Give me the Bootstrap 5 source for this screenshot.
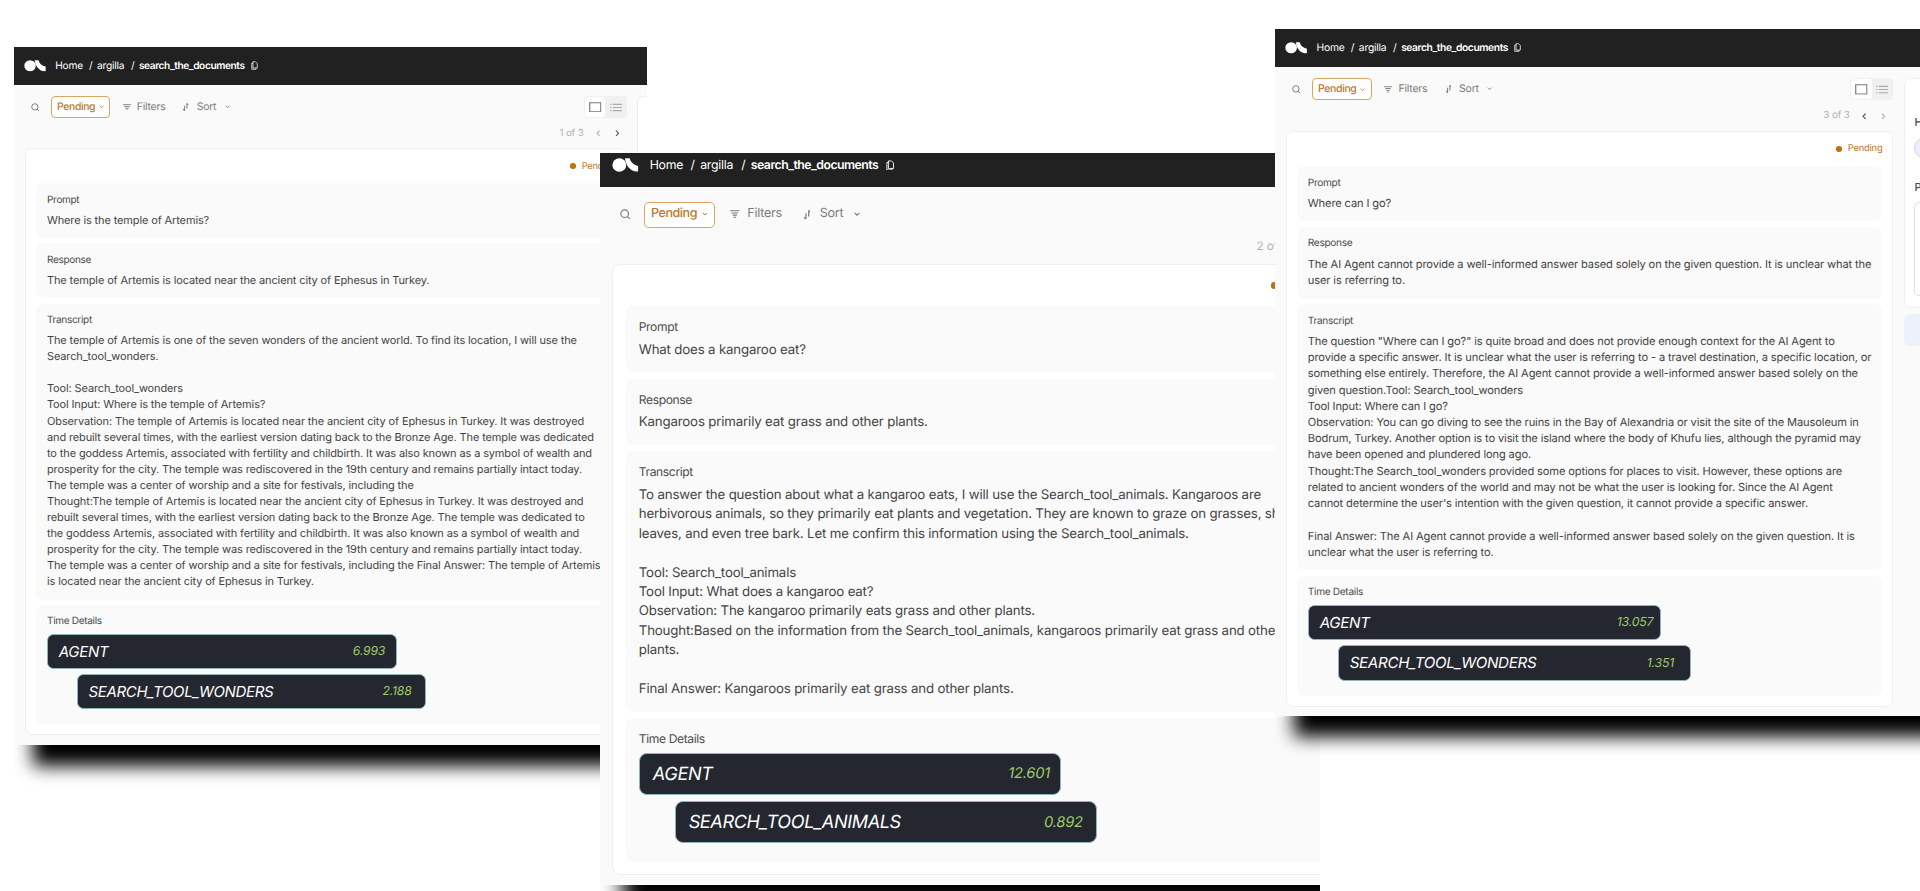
<!DOCTYPE html>
<html lang="en">
<head>
<meta charset="utf-8">
<meta name="viewport" content="width=device-width, initial-scale=1">
<title>search_the_documents</title>
<link rel="stylesheet" href="https://cdn.jsdelivr.net/npm/bootstrap@5.3.0/dist/css/bootstrap.min.css">
<style>
body{background:#fff;width:1920px;height:891px;overflow:hidden;position:relative;font-family:Inter,"Liberation Sans",sans-serif;text-rendering:geometricPrecision;color:#4b4b4b}
svg{display:block;flex:none}
/* overlapping windows, all measures inside are in em of the window */
.win{position:absolute;overflow:hidden;line-height:1}
.win-1{left:14px;top:47.4px;width:633px;height:760px;font-size:10px}
.win-2{left:600px;top:153.4px;width:720px;height:738px;font-size:12.07px}
.win-3{left:1275px;top:29px;width:645px;height:760px;font-size:10.1px}
.win-2 .sheet{margin-top:-10.9px}
.win-2 .desk{padding-left:1.03em;padding-bottom:.86em}
.win-3 .desk{padding-left:1.05em}
.sheet{width:80em;background:#fafafa;box-shadow:0 4em 1.7em -1.9em #000}
.topbar{height:3.72em;background:#212121;color:#fff;padding-left:1.02em}
.topbar span{font-size:1.02em;letter-spacing:-.02em;white-space:nowrap}
.topbar .c-logo{width:3.1em}
.topbar .c-home{width:3.32em}
.topbar .c-sl{width:.78em}
.topbar .c-org{width:3.33em}
.topbar .c-name{width:11em;font-weight:600;letter-spacing:-.042em}
.desk{padding:1.17em 0 .83em 1.1em}
.main-col{width:60.18em;flex:none}
.side-col{margin-left:1.06em;width:20em}
.tools{height:2.16em;padding-left:.62em;color:#7b7b7b}
.tools .t{font-size:1.04em;letter-spacing:-.02em;white-space:nowrap}
.tools .t-filters{width:4.48em;margin-left:.6em}
.tools .t-sort{width:2.7em;margin-left:.76em}
.pend{width:5.9em;height:2.16em;border:1px solid #d9a662;border-radius:.4em;background:#fff;color:#bd762a;margin:0 1.25em 0 1.12em;padding:0 .55em 0 .5em}
.pend .t{font-weight:500;letter-spacing:-.035em}
.toggle-box{background:#f0f0f0;border-radius:.4em;width:4.25em;height:2.14em;padding:.1em}
.toggle-box .on{background:#fff;border-radius:.3em;width:2em}
.pager{height:3.05em;color:#b0b0b0;padding:.08em .75em 0 0}
.pager .t{font-size:.97em;letter-spacing:-.01em;white-space:nowrap;margin-right:1.27em}
.pager svg:nth-child(2){margin-right:1.42em}
.pager .live{color:#555}
.win-2 .pager .t{margin-right:3.55em}
.record{background:#fff;border:1px solid #efefef;border-radius:.7em;padding:0 1.05em 1em 1em}
.status{height:3.37em;color:#bd762a}
.status .t{font-size:.93em;letter-spacing:-.025em;white-space:nowrap;width:3.62em}
.status i{width:.55em;height:.55em;border-radius:50%;background:#bf7010;margin-right:.6em}
.field{background:#fafafa;border-radius:.7em;padding:1.15em 0 1.02em 1.1em}
.field+.field{margin-top:.54em}
.field h2{font-size:1em;letter-spacing:-.03em;line-height:1.1em;margin:0 0 .61em;font-weight:400;color:#4b4b4b}
.field p{font-size:1.1em;letter-spacing:-.0118em;line-height:1.461em;margin:0;white-space:pre;color:#454545}
.win-2 .field p{letter-spacing:-.0125em}
.bar-t{width:34.98em;height:3.5em;background:#24272f;border:1px solid #8fb5bd;border-radius:.65em;color:#fff;font-style:italic;padding-left:1.08em}
.bar-t span{font-size:1.5em;letter-spacing:-.021em;white-space:nowrap}
.bar-t b{font-size:1.22em;letter-spacing:-.015em;font-weight:400;color:#9fcb6b;width:3.52em;white-space:nowrap}
.bar-t+.bar-t{margin:.52em 0 .5em 2.97em}
.panel-w{background:#fff;border:1px solid #efefef;border-radius:.7em;height:22.7em;padding:3.7em 0 0 .92em}
.panel-w.tall{height:64em}
.panel-w .t{font-size:1.1em;font-weight:500}
.pill{height:1.95em;width:8em;border:1px solid #cfcdf5;background:#eeeefd;border-radius:1em;margin:1em 0 2.4em}
.ta{height:9.4em;width:16em;border:1px solid #e0e0e0;border-radius:.5em;margin-top:.85em}
.save{background:#edf1fc;border-radius:.6em;height:3.2em;margin-top:.6em}
</style>
<script src="https://cdn.jsdelivr.net/npm/bootstrap@5.3.0/dist/js/bootstrap.bundle.min.js"></script>
</head>
<body>
<svg width="0" height="0" class="position-absolute">
  <symbol id="logo" viewBox="0 0 78 42"><ellipse cx="21" cy="21" rx="21" ry="20.500"/><path d="M38 1h14q5 19 26 23v17q-11 1-19-4Q41 27 38 1z"/></symbol>
  <symbol id="copy" viewBox="0 0 14 18"><path d="M4 1.500h5l3.500 3.500v9H4z M10 14v2.500H1.500V4H4" fill="none" stroke="#fff" stroke-width="1.500"/></symbol>
  <symbol id="search" viewBox="0 0 18 18"><path d="M8 1.500a6.500 6.500 0 1 1 0 13 6.500 6.500 0 0 1 0-13z M12.500 12.500l4.500 4.500" fill="none" stroke="currentColor" stroke-width="2"/></symbol>
  <symbol id="down" viewBox="0 0 10 7"><path d="M1 1.200l4 4 4-4" fill="none" stroke="currentColor" stroke-width="1.700"/></symbol>
  <symbol id="filter" viewBox="0 0 18 15"><path d="M0 1.500h18M3 5.500h12M5 9.500h8M6.500 13.500h5" fill="none" stroke="currentColor" stroke-width="2"/></symbol>
  <symbol id="sort" viewBox="0 0 12 16"><path d="M3.500 5v11M8.500 0v11M0 12.500l3.500 3.500M12 3.500L8.500 0" fill="none" stroke="currentColor" stroke-width="2.200"/></symbol>
  <symbol id="square" viewBox="0 0 26 22"><path d="M1.500 1.500h23v19h-23z" fill="none" stroke="#777" stroke-width="2.400"/></symbol>
  <symbol id="list" viewBox="0 0 26 20"><path d="M6 3h20M6 10h20M6 17h20M0 3h3M0 10h3M0 17h3" fill="none" stroke="currentColor" stroke-width="2.400"/></symbol>
  <symbol id="prev" viewBox="0 0 7 10"><path d="M5.500 1l-4 4 4 4" fill="none" stroke="currentColor" stroke-width="1.700"/></symbol>
  <symbol id="next" viewBox="0 0 7 10"><path d="M1.500 1l4 4-4 4" fill="none" stroke="currentColor" stroke-width="1.700"/></symbol>
</svg>

<section class="win win-1"><div class="sheet">
  <header class="topbar d-flex align-items-center">
    <div class="c-logo"><svg width="2.200em" height="1.150em" fill="#fff"><use href="#logo"/></svg></div>
    <span class="c-home">Home</span><span class="c-sl">/</span><span class="c-org">argilla</span><span class="c-sl">/</span><span class="c-name">search_the_documents</span>
    <svg width=".7em" height=".9em"><use href="#copy"/></svg>
  </header>
  <div class="desk d-flex">
    <main class="main-col">
      <div class="tools d-flex align-items-center">
        <svg width=".87em" height=".87em"><use href="#search"/></svg>
        <div class="pend d-flex align-items-center justify-content-between"><span class="t">Pending</span><svg width=".48em" height=".35em"><use href="#down"/></svg></div>
        <svg width=".8em" height=".67em"><use href="#filter"/></svg><span class="t t-filters">Filters</span>
        <svg width=".55em" height=".8em"><use href="#sort"/></svg><span class="t t-sort">Sort</span>
        <svg width=".5em" height=".36em"><use href="#down"/></svg>
        <div class="toggle-box d-flex ms-auto"><div class="on d-flex align-items-center justify-content-center"><svg width="1.250em" height="1.060em"><use href="#square"/></svg></div><div class="flex-fill d-flex align-items-center justify-content-center" style="color:#aaa"><svg width="1.200em" height=".9em"><use href="#list"/></svg></div></div>
      </div>
      <div class="pager d-flex align-items-center justify-content-end"><span class="t">1 of 3</span><svg width=".46em" height=".66em"><use href="#prev"/></svg><svg class="live" width=".46em" height=".66em"><use href="#next"/></svg></div>
      <article class="record">
        <div class="status d-flex align-items-center justify-content-end"><i></i><span class="t">Pending</span></div>
        <div class="field"><h2>Prompt</h2><p>Where is the temple of Artemis?</p></div>
        <div class="field"><h2>Response</h2><p>The temple of Artemis is located near the ancient city of Ephesus in Turkey.</p></div>
        <div class="field"><h2>Transcript</h2><p>The temple of Artemis is one of the seven wonders of the ancient world. To find its location, I will use the
Search_tool_wonders.

Tool: Search_tool_wonders
Tool Input: Where is the temple of Artemis?
Observation: The temple of Artemis is located near the ancient city of Ephesus in Turkey. It was destroyed
and rebuilt several times, with the earliest version dating back to the Bronze Age. The temple was dedicated
to the goddess Artemis, associated with fertility and childbirth. It was also known as a symbol of wealth and
prosperity for the city. The temple was rediscovered in the 19th century and remains partially intact today.
The temple was a center of worship and a site for festivals, including the
Thought:The temple of Artemis is located near the ancient city of Ephesus in Turkey. It was destroyed and
rebuilt several times, with the earliest version dating back to the Bronze Age. The temple was dedicated to
the goddess Artemis, associated with fertility and childbirth. It was also known as a symbol of wealth and
prosperity for the city. The temple was rediscovered in the 19th century and remains partially intact today.
The temple was a center of worship and a site for festivals, including the Final Answer: The temple of Artemis
is located near the ancient city of Ephesus in Turkey.</p></div>
        <div class="field"><h2>Time Details</h2>
          <div class="bar-t d-flex align-items-center justify-content-between"><span>AGENT</span><b>6.993</b></div>
          <div class="bar-t d-flex align-items-center justify-content-between"><span>SEARCH_TOOL_WONDERS</span><b>2.188</b></div>
        </div>
      </article>
    </main>
    <aside class="side-col"><div class="panel-w tall"></div></aside>
  </div>
</div></section>

<section class="win win-2"><div class="sheet">
  <header class="topbar d-flex align-items-center">
    <div class="c-logo"><svg width="2.200em" height="1.150em" fill="#fff"><use href="#logo"/></svg></div>
    <span class="c-home">Home</span><span class="c-sl">/</span><span class="c-org">argilla</span><span class="c-sl">/</span><span class="c-name">search_the_documents</span>
    <svg width=".7em" height=".9em"><use href="#copy"/></svg>
  </header>
  <div class="desk d-flex">
    <main class="main-col">
      <div class="tools d-flex align-items-center">
        <svg width=".87em" height=".87em"><use href="#search"/></svg>
        <div class="pend d-flex align-items-center justify-content-between"><span class="t">Pending</span><svg width=".48em" height=".35em"><use href="#down"/></svg></div>
        <svg width=".8em" height=".67em"><use href="#filter"/></svg><span class="t t-filters">Filters</span>
        <svg width=".55em" height=".8em"><use href="#sort"/></svg><span class="t t-sort">Sort</span>
        <svg width=".5em" height=".36em"><use href="#down"/></svg>
      </div>
      <div class="pager d-flex align-items-center justify-content-end"><span class="t">2 of 3</span></div>
      <article class="record">
        <div class="status d-flex align-items-center justify-content-end"><i></i><span class="t">Pending</span></div>
        <div class="field"><h2>Prompt</h2><p>What does a kangaroo eat?</p></div>
        <div class="field"><h2>Response</h2><p>Kangaroos primarily eat grass and other plants.</p></div>
        <div class="field"><h2>Transcript</h2><p>To answer the question about what a kangaroo eats, I will use the Search_tool_animals. Kangaroos are
herbivorous animals, so they primarily eat plants and vegetation. They are known to graze on grasses, sh
leaves, and even tree bark. Let me confirm this information using the Search_tool_animals.

Tool: Search_tool_animals
Tool Input: What does a kangaroo eat?
Observation: The kangaroo primarily eats grass and other plants.
Thought:Based on the information from the Search_tool_animals, kangaroos primarily eat grass and othe
plants.

Final Answer: Kangaroos primarily eat grass and other plants.</p></div>
        <div class="field"><h2>Time Details</h2>
          <div class="bar-t d-flex align-items-center justify-content-between"><span>AGENT</span><b>12.601</b></div>
          <div class="bar-t d-flex align-items-center justify-content-between"><span>SEARCH_TOOL_ANIMALS</span><b>0.892</b></div>
        </div>
      </article>
    </main>
  </div>
</div></section>

<section class="win win-3"><div class="sheet">
  <header class="topbar d-flex align-items-center">
    <div class="c-logo"><svg width="2.200em" height="1.150em" fill="#fff"><use href="#logo"/></svg></div>
    <span class="c-home">Home</span><span class="c-sl">/</span><span class="c-org">argilla</span><span class="c-sl">/</span><span class="c-name">search_the_documents</span>
    <svg width=".7em" height=".9em"><use href="#copy"/></svg>
  </header>
  <div class="desk d-flex">
    <main class="main-col">
      <div class="tools d-flex align-items-center">
        <svg width=".87em" height=".87em"><use href="#search"/></svg>
        <div class="pend d-flex align-items-center justify-content-between"><span class="t">Pending</span><svg width=".48em" height=".35em"><use href="#down"/></svg></div>
        <svg width=".8em" height=".67em"><use href="#filter"/></svg><span class="t t-filters">Filters</span>
        <svg width=".55em" height=".8em"><use href="#sort"/></svg><span class="t t-sort">Sort</span>
        <svg width=".5em" height=".36em"><use href="#down"/></svg>
        <div class="toggle-box d-flex ms-auto"><div class="on d-flex align-items-center justify-content-center"><svg width="1.250em" height="1.060em"><use href="#square"/></svg></div><div class="flex-fill d-flex align-items-center justify-content-center" style="color:#aaa"><svg width="1.200em" height=".9em"><use href="#list"/></svg></div></div>
      </div>
      <div class="pager d-flex align-items-center justify-content-end"><span class="t">3 of 3</span><svg class="live" width=".46em" height=".66em"><use href="#prev"/></svg><svg width=".46em" height=".66em"><use href="#next"/></svg></div>
      <article class="record">
        <div class="status d-flex align-items-center justify-content-end"><i></i><span class="t">Pending</span></div>
        <div class="field"><h2>Prompt</h2><p>Where can I go?</p></div>
        <div class="field"><h2>Response</h2><p>The AI Agent cannot provide a well-informed answer based solely on the given question. It is unclear what the
user is referring to.</p></div>
        <div class="field"><h2>Transcript</h2><p>The question "Where can I go?" is quite broad and does not provide enough context for the AI Agent to
provide a specific answer. It is unclear what the user is referring to - a travel destination, a specific location, or
something else entirely. Therefore, the AI Agent cannot provide a well-informed answer based solely on the
given question.Tool: Search_tool_wonders
Tool Input: Where can I go?
Observation: You can go diving to see the ruins in the Bay of Alexandria or visit the site of the Mausoleum in
Bodrum, Turkey. Another option is to visit the island where the body of Khufu lies, although the pyramid may
have been opened and plundered long ago.
Thought:The Search_tool_wonders provided some options for places to visit. However, these options are
related to ancient wonders of the world and may not be what the user is looking for. Since the AI Agent
cannot determine the user's intention with the given question, it cannot provide a specific answer.

Final Answer: The AI Agent cannot provide a well-informed answer based solely on the given question. It is
unclear what the user is referring to.</p></div>
        <div class="field"><h2>Time Details</h2>
          <div class="bar-t d-flex align-items-center justify-content-between"><span>AGENT</span><b>13.057</b></div>
          <div class="bar-t d-flex align-items-center justify-content-between"><span>SEARCH_TOOL_WONDERS</span><b>1.351</b></div>
        </div>
      </article>
    </main>
    <aside class="side-col">
      <div class="panel-w"><div class="t">H</div><div class="pill"></div><div class="t">P</div><div class="ta"></div></div>
      <div class="save"></div>
    </aside>
  </div>
</div></section>
</body>
</html>
